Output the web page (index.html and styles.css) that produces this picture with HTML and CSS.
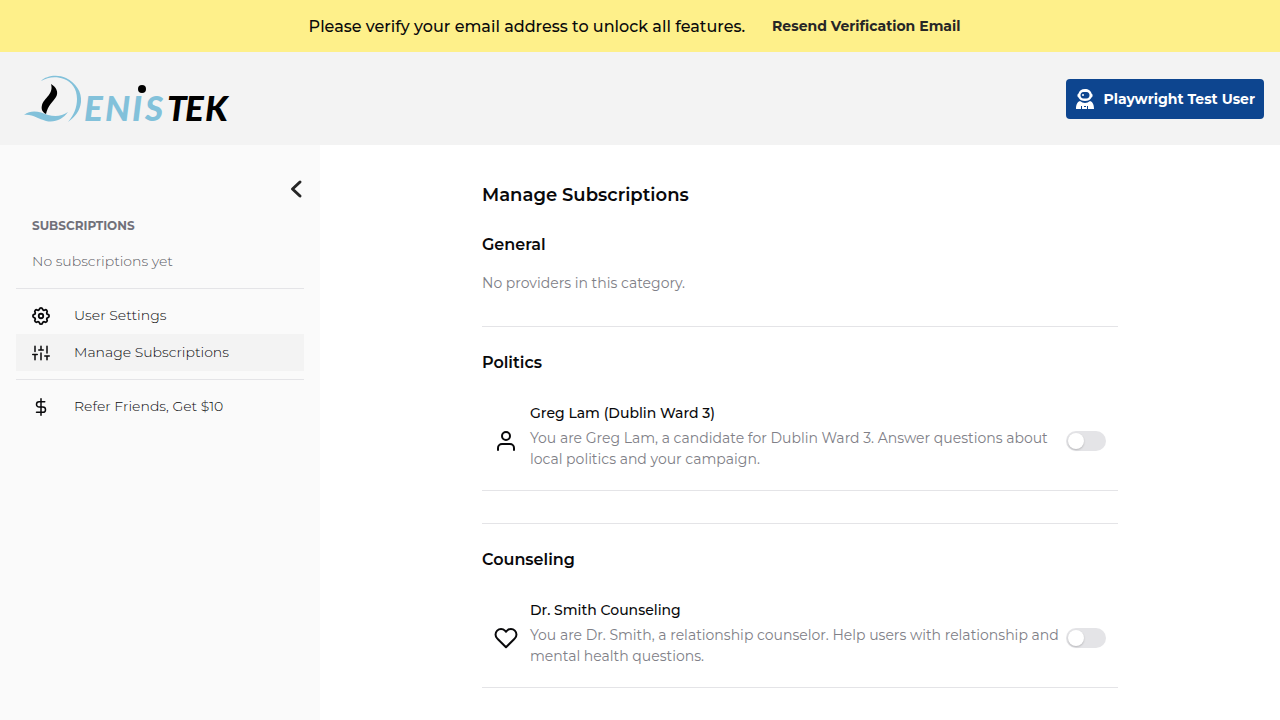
FILE: index.html
```html
<!DOCTYPE html>
<html lang="en">
<head>
<meta charset="utf-8">
<meta name="viewport" content="width=device-width, initial-scale=1">
<title>Manage Subscriptions</title>
<link rel="stylesheet" href="styles.css">
</head>
<body>
<div class="banner">
  <span>Please verify your email address to unlock all features.</span>
  <button class="banner-action" type="button">Resend Verification Email</button>
</div>
<header class="header">
  <a class="brand" href="#" aria-label="Denistek">
    <svg class="logo" width="220" height="60" viewBox="0 -5 220 60">
      <path fill="#82c1da" d="M17 7C22 2 33 0 42 4C52 9 58 18 57 28C56 37 51 43 44 48C50 41 53 33 53 25C53 15 48 8 40 5C32 2 24 3 17 7Z"/>
      <path fill="#82c1da" d="M0 41C8 35 16 38 24 41C32 43 38 42 44 38C39 45 31 49 22 47C14 45 9 40 0 41Z"/>
      <path fill="#000" d="M27 10C32 13 35 18 32 23C29 28 24 31 22 40C18 38 17 35 18 31C20 24 30 20 27 10Z"/>
      <circle cx="118" cy="15" r="4"/>
      <text class="logo-text" y="47"><tspan class="logo-blue" x="60 81 108 121">ENIS</tspan><tspan x="143 161 181">TEK</tspan></text>
    </svg>
  </a>
  <button class="user-button" type="button">
    <svg width="20" height="20" viewBox="0 0 20 20" fill="#fff">
      <path fill-rule="evenodd" d="M10 0C13.500 0 16 2 16.500 4.500C18 5 18 8 16.500 8.500C15.500 11 13 12 10 12S4.500 11 3.500 8.500C2 8 2 5 3.500 4.500C4 2 6.500 0 10 0ZM8.500 3C6.500 3 5.500 4.500 5.500 6.200S6.500 9.400 8.500 9.400H11.500C13.500 9.400 14.500 8 14.500 6.200S13.500 3 11.500 3Z"/>
      <circle cx="8" cy="6" r="1"/>
      <path fill-rule="evenodd" d="M5 12C8 14.500 12 14.500 15 12C18 13 19 16 19 20H1C1 16 2 13 5 12ZM6 17V20H7V17ZM9 17V18H11V17ZM12 17V20H13V17Z"/>
    </svg>
    Playwright Test User
  </button>
</header>
<div class="layout">
  <aside class="sidebar">
    <button class="collapse" type="button" aria-label="Collapse sidebar">
      <svg width="16" height="20" viewBox="0 0 16 20" fill="none" stroke="#262626" stroke-width="3" stroke-linecap="round" stroke-linejoin="round"><path d="M12 3L4.500 10L12 17"/></svg>
    </button>
    <h2 class="side-title">SUBSCRIPTIONS</h2>
    <p class="side-empty">No subscriptions yet</p>
    <nav>
      <div class="nav-group">
        <a class="nav-link" href="#">
          <svg class="icon-small" viewBox="2 2 20 20"><path d="M10.325 4.317c.426-1.756 2.924-1.756 3.350 0a1.724 1.724 0 0 0 2.573 1.066c1.543-.94 3.310.826 2.370 2.370a1.724 1.724 0 0 0 1.065 2.572c1.756.426 1.756 2.924 0 3.350a1.724 1.724 0 0 0-1.066 2.573c.94 1.543-.826 3.310-2.370 2.370a1.724 1.724 0 0 0-2.572 1.065c-.426 1.756-2.924 1.756-3.350 0a1.724 1.724 0 0 0-2.573-1.066c-1.543.94-3.310-.826-2.370-2.370a1.724 1.724 0 0 0-1.065-2.572c-1.756-.426-1.756-2.924 0-3.350a1.724 1.724 0 0 0 1.066-2.573c-.94-1.543.826-3.310 2.370-2.370 1 .608 2.296.070 2.572-1.065z"/><circle cx="12" cy="12" r="2.500"/></svg>
          User Settings
        </a>
        <a class="nav-link nav-active" href="#" aria-current="page">
          <svg class="icon-small" viewBox="0 0 24 24"><path d="M4 21v-7M4 10V3M12 21v-9M12 8V3M20 21v-5M20 12V3M1 14h6M9 8h6M17 16h6"/></svg>
          Manage Subscriptions
        </a>
      </div>
      <div class="nav-group">
        <a class="nav-link" href="#">
          <svg class="icon-small" viewBox="0 0 24 24"><path d="M12 1v22M17 5H9.500a3.500 3.500 0 0 0 0 7h5a3.500 3.500 0 0 1 0 7H6"/></svg>
          Refer Friends, Get $10
        </a>
      </div>
    </nav>
  </aside>
  <main class="main">
    <div class="content">
      <h1 class="page-title">Manage Subscriptions</h1>
      <section class="category category-first">
        <h2 class="category-title">General</h2>
        <p class="category-empty">No providers in this category.</p>
      </section>
      <section class="category">
        <h2 class="category-title">Politics</h2>
        <div class="provider">
          <svg class="icon" viewBox="0 0 24 24"><path d="M20 21v-2a4 4 0 0 0-4-4H8a4 4 0 0 0-4 4v2"/><circle cx="12" cy="7" r="4"/></svg>
          <div class="provider-text">
            <label class="provider-name" for="greg">Greg Lam (Dublin Ward 3)</label>
            <p class="provider-desc">You are Greg Lam, a candidate for Dublin Ward 3. Answer questions about local politics and your campaign.</p>
          </div>
          <input class="toggle" type="checkbox" role="switch" id="greg">
        </div>
      </section>
      <section class="category">
        <h2 class="category-title">Counseling</h2>
        <div class="provider">
          <svg class="icon" viewBox="0 0 24 24"><path d="M20.840 4.610a5.500 5.500 0 0 0-7.780 0L12 5.670l-1.060-1.060a5.500 5.500 0 0 0-7.780 7.780l1.060 1.060L12 21.230l7.780-7.780 1.060-1.060a5.500 5.500 0 0 0 0-7.780z"/></svg>
          <div class="provider-text">
            <label class="provider-name" for="smith">Dr. Smith Counseling</label>
            <p class="provider-desc">You are Dr. Smith, a relationship counselor. Help users with relationship and mental health questions.</p>
          </div>
          <input class="toggle" type="checkbox" role="switch" id="smith">
        </div>
      </section>
    </div>
  </main>
</div>
</body>
</html>
```
FILE: styles.css
```css
* { box-sizing: border-box; }
body {
  margin: 0;
  min-height: 100vh;
  display: flex;
  flex-direction: column;
  font-family: Montserrat, Inter, sans-serif;
  font-size: 14px;
  line-height: 21px;
  color: #09090b;
  background: #fff;
}
h1, h2, p { margin: 0; }
button { border: 0; font-family: inherit; cursor: pointer; }
.banner {
  display: flex;
  align-items: center;
  justify-content: center;
  gap: 16px;
  padding: 6px 16px;
  background: #fef08a;
  font-size: 16px;
  font-weight: 500;
}
.banner-action {
  padding: 0 11px;
  height: 40px;
  background: transparent;
  color: #262626;
  font-size: 14px;
  font-weight: 700;
}
.header {
  display: flex;
  align-items: center;
  justify-content: space-between;
  padding: 16px 16px 16px 24px;
  min-height: 93px;
  background: #f3f3f3;
}
.logo { display: block; }
.logo-text { font-family: Lato, sans-serif; font-size: 35px; font-style: italic; font-weight: 900; }
.logo-blue { fill: #82c1da; }
.user-button {
  display: flex;
  align-items: center;
  gap: 8px;
  height: 40px;
  padding: 0 9px;
  border-radius: 4px;
  background: #0d458f;
  color: #fff;
  font-size: 14px;
  font-weight: 700;
}
.layout { display: flex; flex: 1; }
.sidebar { flex: 0 0 320px; padding: 28px 16px; background: #fafafa; }
.collapse {
  display: flex;
  align-items: center;
  height: 32px;
  margin-left: auto;
  padding: 0;
  background: transparent;
}
.side-title { padding: 10px 16px 0; font-size: 12px; font-weight: 700; color: #71717a; }
.side-empty { padding: 15px 16px 16px; font-weight: 300; color: #5a5a63; }
.nav-group { padding: 8px 0; border-top: 1px solid #e4e4e7; }
.nav-link {
  display: flex;
  align-items: center;
  gap: 24px;
  padding: 8px 16px;
  color: #09090b;
  font-weight: 300;
  text-decoration: none;
}
.nav-active { background: #f3f3f3; }
.icon, .icon-small {
  flex: none;
  width: 24px;
  height: 24px;
  fill: none;
  stroke: #09090b;
  stroke-width: 2;
  stroke-linecap: round;
  stroke-linejoin: round;
}
.icon-small { width: 18px; height: 18px; }
.main { flex: 1; padding: 36px 16px; }
.content { max-width: 636px; margin: 0 auto; }
.page-title { font-size: 18px; line-height: 28px; font-weight: 600; }
.category { margin-top: 32px; padding-top: 24px; border-top: 1px solid #e4e4e7; }
.category-first { margin-top: 0; border-top: 0; }
.category-title { margin-bottom: 16px; font-size: 16px; line-height: 24px; font-weight: 600; }
.category-empty, .provider-desc { color: #808087; }
.provider { display: flex; align-items: center; padding: 12px; border-bottom: 1px solid #e4e4e7; }
.provider-text { flex: 1; padding: 0 0 8px 12px; }
.provider-name { display: block; margin-bottom: 4px; font-weight: 500; }
.toggle {
  appearance: none;
  flex: none;
  width: 40px;
  height: 20px;
  margin: 0;
  padding: 2px;
  border-radius: 10px;
  background: #e4e4e7;
}
.toggle::before {
  content: "";
  display: block;
  width: 16px;
  height: 16px;
  border-radius: 8px;
  background: #fff;
  box-shadow: 0 1px 2px #0003;
}
.toggle:checked { background: #0d458f; }
.toggle:checked::before { margin-left: 20px; }
```
